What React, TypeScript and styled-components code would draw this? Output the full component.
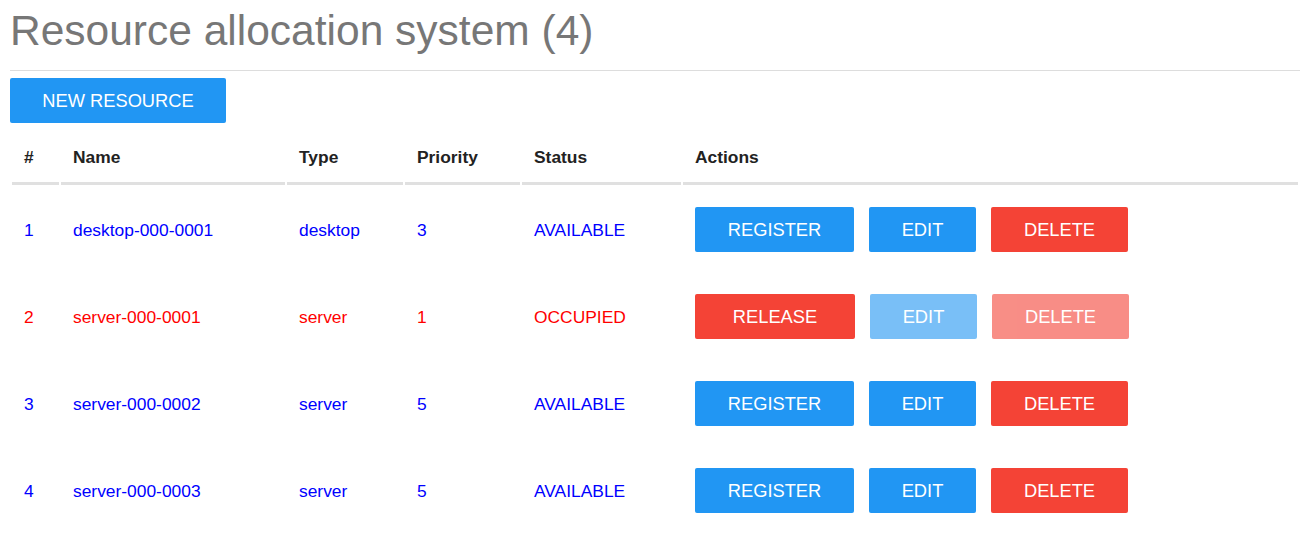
import React from "react";
import styled, { createGlobalStyle } from "styled-components";

const GlobalStyle = createGlobalStyle`
  html, body {
    margin: 0;
    padding: 0;
    background: #ffffff;
  }
  body {
    font-family: "Liberation Sans", Arial, sans-serif;
  }
`;

const Page = styled.div`
  padding: 7px 4px 0 10px;
`;

const Title = styled.h1`
  margin: 0;
  font-size: 42.5px;
  font-weight: normal;
  line-height: 48px;
  color: #777777;
`;

const Rule = styled.hr`
  margin: 15px 0 7px;
  border: 0;
  border-top: 1px solid #dddddd;
  height: 0;
`;

type Tone = "blue" | "red";

const Button = styled.button<{ $tone: Tone; $width: number }>`
  display: inline-flex;
  align-items: center;
  justify-content: center;
  box-sizing: border-box;
  height: 45px;
  padding: 0 28px;
  min-width: ${(p) => `${p.$width}px`};
  border: 0;
  border-radius: 2px;
  background: ${(p) => (p.$tone === "blue" ? "#2196f3" : "#f44336")};
  color: #ffffff;
  font-family: "Liberation Sans", Arial, sans-serif;
  font-size: 18.3px;
  text-transform: uppercase;
  cursor: pointer;
  &:disabled {
    opacity: 0.6;
    cursor: default;
  }
`;

const Table = styled.table`
  margin-top: 7px;
  width: 100%;
  border-spacing: 2px;
  table-layout: fixed;
  font-size: 17.4px;
`;

const Th = styled.th<{ $width?: number }>`
  width: ${(p) => (p.$width ? `${p.$width}px` : "auto")};
  padding: 15px 12px;
  line-height: 20px;
  text-align: left;
  font-weight: bold;
  color: #222222;
  border-bottom: 3px solid #e0e0e0;
`;

const Row = styled.tr<{ $occupied: boolean }>`
  color: ${(p) => (p.$occupied ? "#ff0000" : "#0000ff")};
`;

const Td = styled.td`
  padding: 20px 12px;
  line-height: 20px;
  vertical-align: middle;
  white-space: nowrap;
`;

const Actions = styled.div`
  display: flex;
  gap: 15px;
`;

type Resource = {
  id: number;
  name: string;
  type: string;
  priority: number;
  occupied: boolean;
};

const resources: Resource[] = [
  { id: 1, name: "desktop-000-0001", type: "desktop", priority: 3, occupied: false },
  { id: 2, name: "server-000-0001", type: "server", priority: 1, occupied: true },
  { id: 3, name: "server-000-0002", type: "server", priority: 5, occupied: false },
  { id: 4, name: "server-000-0003", type: "server", priority: 5, occupied: false },
];

export default function App() {
  return (
    <Page>
      <GlobalStyle />
      <Title>Resource allocation system ({resources.length})</Title>
      <Rule />
      <Button $tone="blue" $width={216}>New resource</Button>
      <Table>
        <thead>
          <tr>
            <Th $width={23}>#</Th>
            <Th $width={200}>Name</Th>
            <Th $width={92}>Type</Th>
            <Th $width={91}>Priority</Th>
            <Th $width={135}>Status</Th>
            <Th>Actions</Th>
          </tr>
        </thead>
        <tbody>
          {resources.map((r) => (
            <Row key={r.id} $occupied={r.occupied}>
              <Td>{r.id}</Td>
              <Td>{r.name}</Td>
              <Td>{r.type}</Td>
              <Td>{r.priority}</Td>
              <Td>{r.occupied ? "OCCUPIED" : "AVAILABLE"}</Td>
              <Td>
                <Actions>
                  {r.occupied ? (
                    <Button $tone="red" $width={160}>Release</Button>
                  ) : (
                    <Button $tone="blue" $width={159}>Register</Button>
                  )}
                  <Button $tone="blue" $width={107} disabled={r.occupied}>Edit</Button>
                  <Button $tone="red" $width={137} disabled={r.occupied}>Delete</Button>
                </Actions>
              </Td>
            </Row>
          ))}
        </tbody>
      </Table>
    </Page>
  );
}
